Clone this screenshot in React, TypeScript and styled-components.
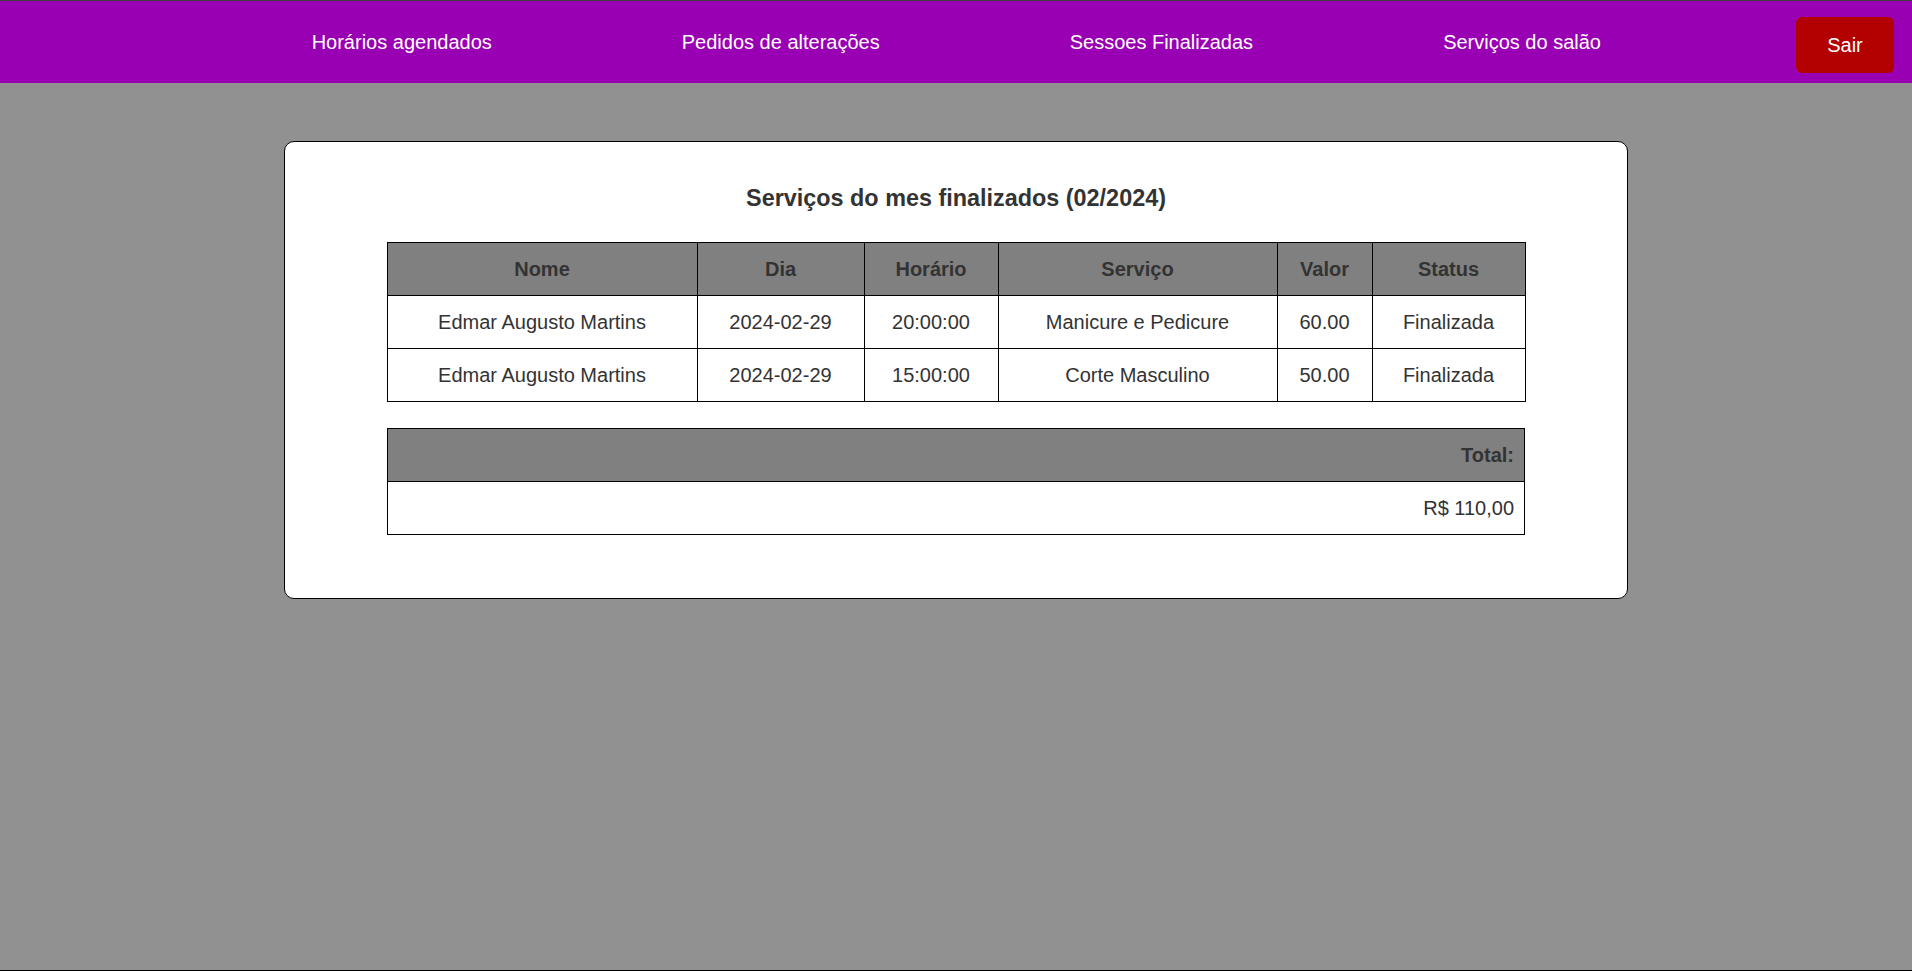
import styled, { createGlobalStyle } from "styled-components";

const GlobalStyle = createGlobalStyle`
  html, body {
    margin: 0;
    padding: 0;
  }
  body {
    font-family: "Liberation Sans", Arial, sans-serif;
    font-size: 20px;
    background-color: #919191;
  }
  * {
    box-sizing: border-box;
  }
`;

const Page = styled.div`
  min-height: 100vh;
  display: flex;
  flex-direction: column;
  background-color: #919191;
  border-top: 1px solid #3f3f3f;
  border-bottom: 1px solid #000;
`;

const Header = styled.header`
  height: 82px;
  background-color: #9900b3;
  display: flex;
  align-items: center;
  justify-content: flex-end;
  gap: 190px;
  padding-right: 18px;
`;

const NavLink = styled.a`
  color: #fff;
  text-decoration: none;
  font-size: 20px;
  cursor: pointer;

  &:hover {
    text-decoration: underline;
  }
`;

const LogoutButton = styled.button`
  font-family: inherit;
  font-size: 20px;
  color: #fff;
  background-color: #b30000;
  border: none;
  border-radius: 6px;
  width: 98px;
  height: 56px;
  margin-top: 6px;
  margin-left: 5px;
  cursor: pointer;
`;

const Main = styled.main`
  flex: 1;
  padding-top: 58px;
`;

const Card = styled.section`
  width: 1344px;
  margin: 0 auto;
  background-color: #fff;
  border: 1px solid #000;
  border-radius: 10px;
  padding: 20px 0 63px;
`;

const Title = styled.h3`
  margin: 23px 0 30px;
  font-size: 23.4px;
  font-weight: bold;
  color: #333;
  text-align: center;
`;

const Table = styled.table<{ $spaced?: boolean }>`
  width: 1138px;
  margin: ${(p) => (p.$spaced ? "26px auto 0" : "0 auto")};
  border-collapse: collapse;
  table-layout: fixed;
  color: #333;
  font-size: 20px;
`;

const Th = styled.th<{ $align?: string }>`
  background-color: #808080;
  border: 1px solid #000;
  height: 53px;
  padding: 0 10px;
  font-weight: bold;
  text-align: ${(p) => p.$align || "center"};
`;

const Td = styled.td<{ $align?: string }>`
  border: 1px solid #000;
  height: 53px;
  padding: 0 10px;
  text-align: ${(p) => p.$align || "center"};
`;

const columns = [
  { label: "Nome", width: 310 },
  { label: "Dia", width: 167 },
  { label: "Horário", width: 134 },
  { label: "Serviço", width: 279 },
  { label: "Valor", width: 95 },
  { label: "Status", width: 153 },
];

const sessions = [
  { nome: "Edmar Augusto Martins", dia: "2024-02-29", horario: "20:00:00", servico: "Manicure e Pedicure", valor: "60.00", status: "Finalizada" },
  { nome: "Edmar Augusto Martins", dia: "2024-02-29", horario: "15:00:00", servico: "Corte Masculino", valor: "50.00", status: "Finalizada" },
];

export default function App() {
  const total = sessions.reduce((sum, s) => sum + parseFloat(s.valor), 0);

  return (
    <>
      <GlobalStyle />
      <Page>
        <Header>
          <NavLink>Horários agendados</NavLink>
          <NavLink>Pedidos de alterações</NavLink>
          <NavLink>Sessoes Finalizadas</NavLink>
          <NavLink>Serviços do salão</NavLink>
          <LogoutButton>Sair</LogoutButton>
        </Header>

        <Main>
          <Card>
            <Title>Serviços do mes finalizados (02/2024)</Title>
            <Table>
              <colgroup>
                {columns.map((c) => (
                  <col key={c.label} style={{ width: c.width }} />
                ))}
              </colgroup>
              <thead>
                <tr>
                  {columns.map((c) => (
                    <Th key={c.label}>{c.label}</Th>
                  ))}
                </tr>
              </thead>
              <tbody>
                {sessions.map((s, i) => (
                  <tr key={i}>
                    <Td>{s.nome}</Td>
                    <Td>{s.dia}</Td>
                    <Td>{s.horario}</Td>
                    <Td>{s.servico}</Td>
                    <Td>{s.valor}</Td>
                    <Td>{s.status}</Td>
                  </tr>
                ))}
              </tbody>
            </Table>

            <Table $spaced>
              <thead>
                <tr>
                  <Th $align="right">Total:</Th>
                </tr>
              </thead>
              <tbody>
                <tr>
                  <Td $align="right">R$ {total.toFixed(2).replace(".", ",")}</Td>
                </tr>
              </tbody>
            </Table>
          </Card>
        </Main>
      </Page>
    </>
  );
}
